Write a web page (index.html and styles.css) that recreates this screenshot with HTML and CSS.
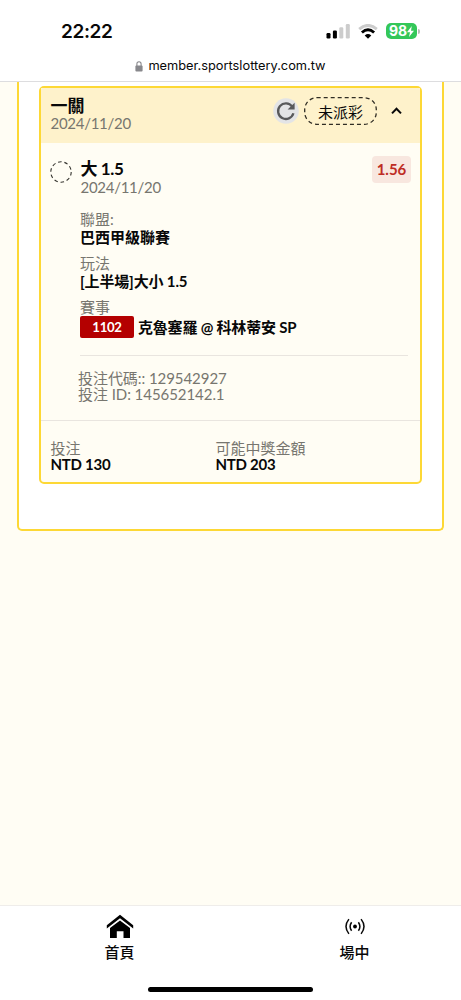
FILE: index.html
```html
<!DOCTYPE html>
<html lang="zh-Hant">
<head>
<meta charset="utf-8">
<meta name="viewport" content="width=device-width, initial-scale=1">
<title>投注紀錄</title>
<link rel="stylesheet" href="styles.css">
</head>
<body>
<header class="browser">
  <div class="status">
    <span class="clock">22:22</span>
    <div class="indicators">
      <svg class="signal" width="24" height="15" viewBox="0 0 24 15"><rect x="0.5" y="9" width="4" height="5.5" rx="1.2"/><rect x="6.9" y="6.5" width="4" height="8" rx="1.2"/><rect class="dim" x="13.3" y="3.3" width="4" height="11.2" rx="1.2"/><rect class="dim" x="19.8" y="0" width="4" height="14.5" rx="1.2"/></svg>
      <svg class="wifi" width="20" height="15" viewBox="0 0 20 15"><path class="outer" d="M1.2 5.2Q10-2.4 18.8 5.2"/><path class="inner" d="M3.9 8.5Q10 3.1 16.1 8.5"/><path class="dot" d="M6.7 11.4Q10 8.8 13.3 11.4L10 14.8Z"/></svg>
      <div class="battery"><span class="level">98</span><svg width="7" height="11" viewBox="0 0 7 11"><path d="M4.8 0L0 6.2H3L2 11L7 4.7H4Z"/></svg></div>
      <span class="battery-cap"></span>
    </div>
  </div>
  <div class="address">
    <svg width="8" height="11" viewBox="0 0 8 11"><path d="M1.9 5V3Q1.9 .7 4 .7T6.1 3V5" fill="none" stroke="#88888c" stroke-width="1.1"/><rect x=".4" y="4.5" width="7.2" height="6" rx="1" fill="#88888c"/></svg>
    <span>member.sportslottery.com.tw</span>
  </div>
</header>
<main class="page">
  <section class="panel">
    <article class="ticket">
      <div class="ticket-head">
        <div class="ticket-title">
          <h1 class="title">一關</h1>
          <p class="muted">2024/11/20</p>
        </div>
        <button class="refresh" aria-label="重新整理"><svg width="26" height="26" viewBox="0 0 26 26"><circle cx="13" cy="13" r="12.8" fill="#e3e4e6"/><path d="M19.2 8.6A7.8 7.8 0 1 0 20.4 15.3" fill="none" stroke="#58595b" stroke-width="2.3"/><path d="M21.6 4.7V11.5H14.6Z" fill="#58595b"/></svg></button>
        <div class="pending"><svg width="73" height="28" viewBox="0 0 73 28"><rect x=".7" y=".7" width="71.6" height="26.6" rx="12"/></svg><span>未派彩</span></div>
        <svg class="chevron" width="11" height="8" viewBox="0 0 11 8"><path d="M1 6.4L5.5 1.8L10 6.4"/></svg>
      </div>
      <div class="selection">
        <svg class="ring" width="22" height="22" viewBox="0 0 22 22"><circle cx="11" cy="11" r="10.2"/></svg>
        <div class="details">
          <div class="pick">
            <div><h2 class="title pick-title">大 1.5</h2><p class="muted">2024/11/20</p></div>
            <span class="odds">1.56</span>
          </div>
          <dl class="facts">
            <div class="fact"><dt>聯盟:</dt><dd>巴西甲級聯賽</dd></div>
            <div class="fact"><dt>玩法</dt><dd class="market">[上半場]大小 1.5</dd></div>
            <div class="fact"><dt>賽事</dt><dd class="match"><span class="code">1102</span><span class="teams">克魯塞羅 @ 科林蒂安 SP</span></dd></div>
          </dl>
          <div class="ids"><p>投注代碼:: 129542927</p><p>投注 ID: 145652142.1</p></div>
        </div>
      </div>
      <dl class="totals">
        <div><dt>投注</dt><dd>NTD 130</dd></div>
        <div><dt>可能中獎金額</dt><dd>NTD 203</dd></div>
      </dl>
    </article>
  </section>
</main>
<nav class="tabs">
  <div class="tab-row">
    <a class="tab"><svg width="28" height="26" viewBox="0 0 28 26"><path d="M14 1.8L27.2 12.3V15.6L14 5.3L.8 15.6V12.3Z"/><path d="M14 7.4L24 15V25H17.5V18.2H10.8V25H4V15Z"/></svg><span>首頁</span></a>
    <a class="tab"><svg class="live" width="22" height="26" viewBox="0 0 22 26"><circle cx="11" cy="13.5" r="1.9"/><path d="M7.6 9.3Q4.6 13.5 7.6 17.7M14.4 9.3Q17.4 13.5 14.4 17.7M4.9 6.1Q-.9 13.5 4.9 20.9M17.1 6.1Q22.9 13.5 17.1 20.9"/></svg><span>場中</span></a>
  </div>
  <div class="home-indicator"></div>
</nav>
</body>
</html>
```
FILE: styles.css
```css
* { box-sizing: border-box; }
body {
  margin: 0;
  height: 1000px;
  display: flex;
  flex-direction: column;
  overflow: hidden;
  background: #fffdf4;
  color: #080808;
  font: 15px/18px Lato, "Noto Sans CJK TC", sans-serif;
}
h1, h2, p, dl, dd { margin: 0; }
svg { display: block; flex: none; }

.browser { height: 82px; background: #fff; border-bottom: 1px solid #dddddf; }
.status {
  height: 56px;
  padding: 7px 41px 0 61px;
  display: flex;
  align-items: center;
  justify-content: space-between;
}
.clock { font: 600 19px/24px Inter, sans-serif; letter-spacing: -.4px; }
.indicators { display: flex; align-items: center; margin-top: -1px; }
.signal .dim { fill: #ccc; }
.wifi { margin: 0 8px; }
.wifi path { fill: none; stroke: #000; stroke-width: 2.9; }
.wifi .outer { stroke: #ccc; }
.wifi .dot { fill: #000; stroke: none; }
.battery {
  width: 31px;
  height: 16px;
  border-radius: 5px;
  background: #34c759;
  color: #fff;
  display: flex;
  align-items: center;
  justify-content: center;
}
.battery svg { fill: #fff; }
.level { font: 700 14px/16px Inter, sans-serif; letter-spacing: -.2px; }
.battery-cap { width: 2px; height: 5px; margin-left: 1px; background: #bbb; border-radius: 0 2px 2px 0; }
.address {
  height: 20px;
  display: flex;
  align-items: center;
  justify-content: center;
  gap: 5px;
  font: 12.8px/20px Inter, sans-serif;
}

.page { flex: 1; padding: 0 17px; }
.panel {
  height: 449px;
  padding: 4px 20px 0;
  background: #fff;
  border: 2px solid #fdd835;
  border-top: 0;
  border-radius: 0 0 5px 5px;
}
.ticket {
  height: 398px;
  background: #fffdf4;
  border: 2px solid #fdd835;
  border-radius: 5px;
}
.ticket-head {
  height: 55px;
  padding: 0 18px 0 9.5px;
  display: flex;
  align-items: flex-start;
  background: #fef2cb;
}
.ticket-title { flex: 1; padding-top: 9px; }
.ticket-title .muted { margin-top: -1px; }
.title { font-size: 17px; line-height: 18px; font-weight: 700; }
.pick-title { letter-spacing: -.4px; }
.muted { color: #77766f; letter-spacing: -.28px; }
.refresh { padding: 0; border: 0; background: none; margin: 10px 5px 0 0; }
.pending { display: grid; margin-top: 9px; line-height: 30px; text-align: center; }
.pending > * { grid-area: 1 / 1; }
.pending rect { fill: none; stroke: #302d24; stroke-width: 1.3; stroke-dasharray: 4 3; }
.chevron { margin: 19px 0 0 14px; }
.chevron path { fill: none; stroke: #080808; stroke-width: 2; }

.selection { height: 277px; display: flex; gap: 6.5px; padding: 17px 9px 0 9px; }
.ring { margin-top: 1px; }
.ring circle { fill: none; stroke: #34332e; stroke-width: 1.1; stroke-dasharray: 3.6 2.8; }
.details { flex: 1; }
.pick { display: flex; justify-content: space-between; padding-left: 2px; height: 50px; }
.odds {
  width: 39px;
  height: 27px;
  margin: -4px 0 0;
  border-radius: 4px;
  background: #f8e7df;
  color: #be2c24;
  font-weight: 700;
  line-height: 27px;
  text-align: center;
}
.facts { padding-left: 1.5px; display: flex; flex-direction: column; gap: 8px; }
dt { color: #77766f; }
dd { font-weight: 700; }
.market { letter-spacing: -.15px; }
.match { display: flex; align-items: center; gap: 4px; height: 22px; white-space: nowrap; }
.teams { letter-spacing: -.2px; }
.code {
  width: 54px;
  height: 22px;
  border-radius: 2px;
  background: #b40000;
  color: #fff;
  font-size: 13.2px;
  line-height: 22px;
  letter-spacing: -.3px;
  text-align: center;
}
.ids {
  margin: 17px 3px 0 1px;
  padding-top: 14px;
  border-top: 1px solid #e9e5df;
  color: #77766f;
  line-height: 16px;
  letter-spacing: -.06px;
}
.ids p { margin-left: -1.5px; }
.totals {
  display: grid;
  grid-template-columns: 165px 1fr;
  padding: 19px 9.5px 0;
  border-top: 1px solid #e9e5df;
  line-height: 16px;
}
.totals dd { letter-spacing: -.25px; }

.tabs { height: 95px; background: #fff; border-top: 1px solid #efedea; }
.tab-row { display: flex; height: 81px; padding: 7px 0 0 2px; }
.tab { flex: none; width: 235px; display: flex; flex-direction: column; align-items: center; font-weight: 500; }
.tab span { margin-top: 4px; }
.live path { fill: none; stroke: #080808; stroke-width: 1.5; }
.home-indicator { width: 165px; height: 5px; margin: 0 auto; border-radius: 3px; background: #000; }
```
